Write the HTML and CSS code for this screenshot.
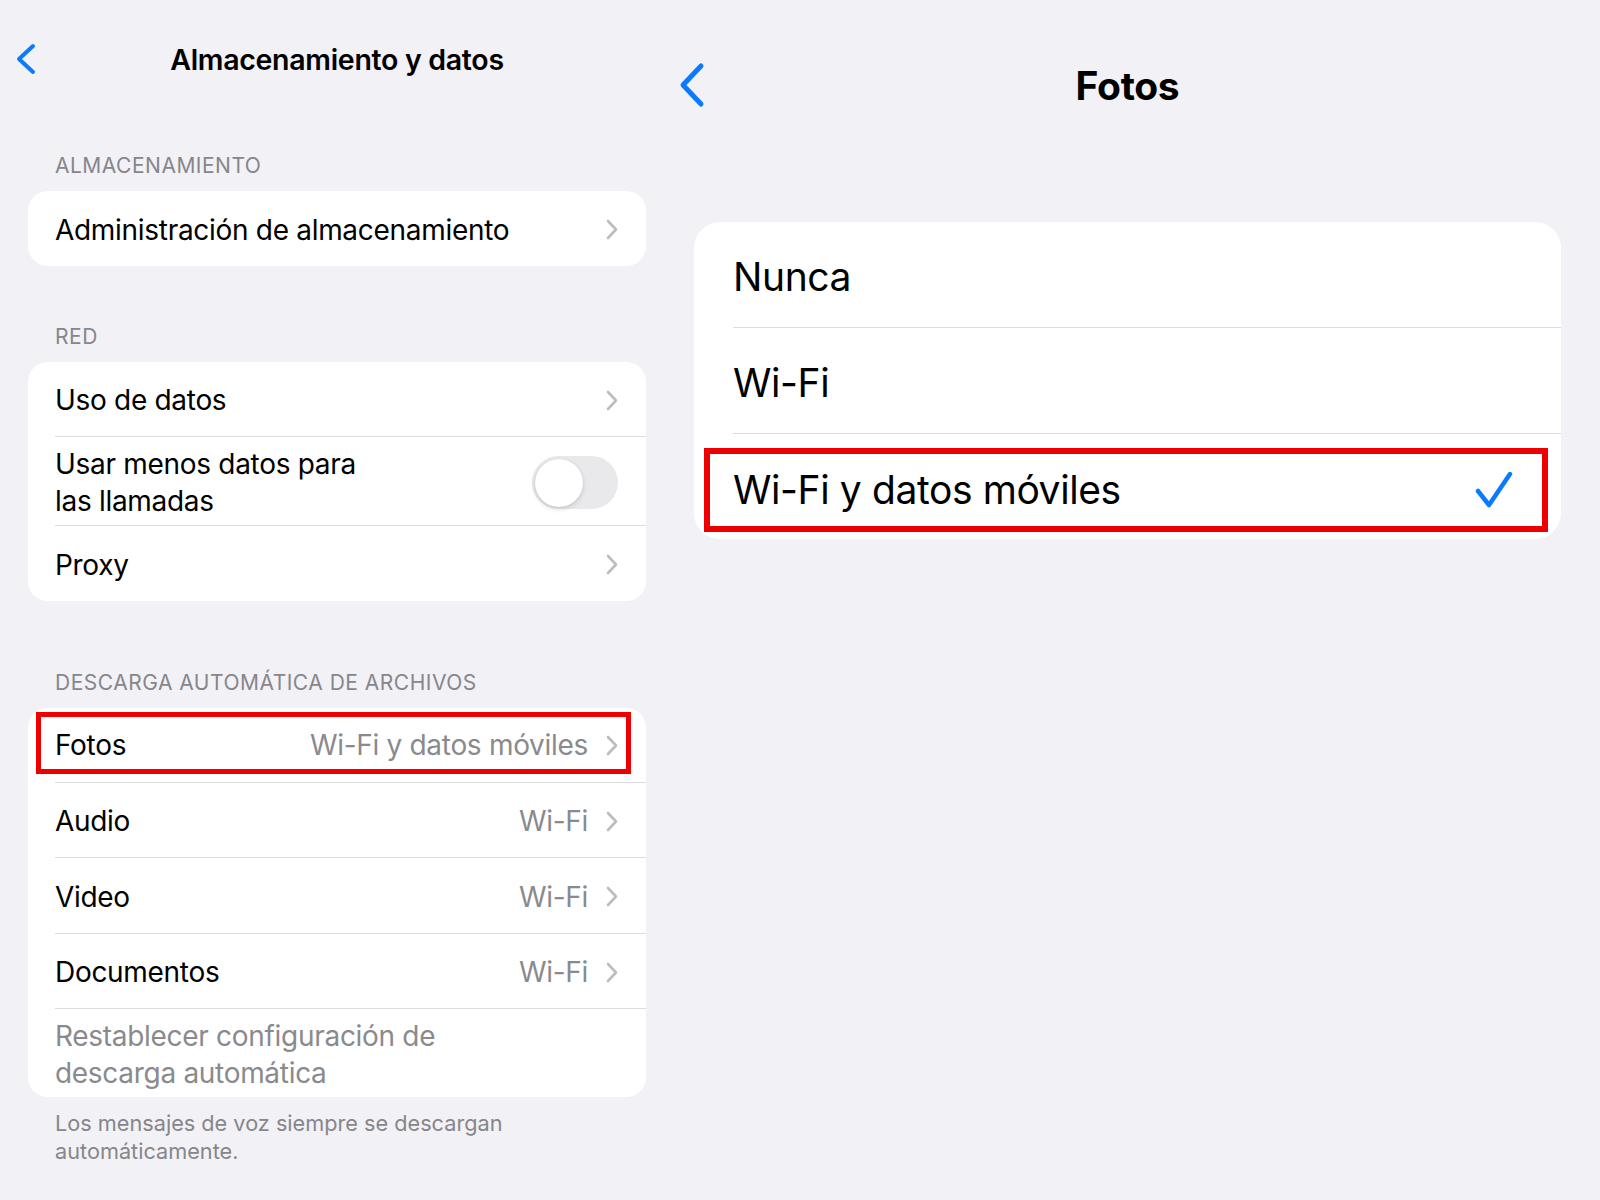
FILE: index.html
```html
<!DOCTYPE html>
<html>
<head>
    <title>Almacenamiento y datos</title>
    <link rel="stylesheet" href="styles.css">
</head>
<body>
<div class="screen">

    <section class="panel-left">
        <header class="nav">
            <svg class="back" width="22" height="32" viewBox="0 0 22 32"><path d="M18 3 L4 16 L18 29"/></svg>
            <h1 class="nav-title">Almacenamiento y datos</h1>
            <span></span>
        </header>

        <div class="group-label first">ALMACENAMIENTO</div>
        <div class="card">
            <div class="row">
                <span class="label">Administración de almacenamiento</span>
                <svg class="chev" width="12" height="21" viewBox="0 0 12 21"><path d="M2 2 L10 10.5 L2 19"/></svg>
            </div>
        </div>

        <div class="group-label">RED</div>
        <div class="card">
            <div class="row">
                <span class="label">Uso de datos</span>
                <svg class="chev" width="12" height="21" viewBox="0 0 12 21"><path d="M2 2 L10 10.5 L2 19"/></svg>
            </div>
            <div class="sep"></div>
            <div class="row tall">
                <span class="label">Usar menos datos para<br>las llamadas</span>
                <div class="toggle"><div class="knob"></div></div>
            </div>
            <div class="sep"></div>
            <div class="row">
                <span class="label">Proxy</span>
                <svg class="chev" width="12" height="21" viewBox="0 0 12 21"><path d="M2 2 L10 10.5 L2 19"/></svg>
            </div>
        </div>

        <div class="group-label wide">DESCARGA AUTOMÁTICA DE ARCHIVOS</div>
        <div class="card">
            <div class="row marked">
                <div class="mark">
                    <span class="label">Fotos</span>
                    <span class="value">Wi-Fi y datos móviles</span>
                    <svg class="chev" width="12" height="21" viewBox="0 0 12 21"><path d="M2 2 L10 10.5 L2 19"/></svg>
                </div>
            </div>
            <div class="sep"></div>
            <div class="row">
                <span class="label">Audio</span>
                <span class="value">Wi-Fi</span>
                <svg class="chev" width="12" height="21" viewBox="0 0 12 21"><path d="M2 2 L10 10.5 L2 19"/></svg>
            </div>
            <div class="sep"></div>
            <div class="row">
                <span class="label">Video</span>
                <span class="value">Wi-Fi</span>
                <svg class="chev" width="12" height="21" viewBox="0 0 12 21"><path d="M2 2 L10 10.5 L2 19"/></svg>
            </div>
            <div class="sep"></div>
            <div class="row">
                <span class="label">Documentos</span>
                <span class="value">Wi-Fi</span>
                <svg class="chev" width="12" height="21" viewBox="0 0 12 21"><path d="M2 2 L10 10.5 L2 19"/></svg>
            </div>
            <div class="sep"></div>
            <div class="row tall">
                <span class="label muted">Restablecer configuración de<br>descarga automática</span>
            </div>
        </div>
        <div class="footnote">
            Los mensajes de voz siempre se descargan<br>automáticamente.
        </div>
    </section>

    <section class="panel-right">
        <header class="nav nav-lg">
            <svg class="back back-lg" width="28" height="46" viewBox="0 0 28 46"><path d="M23 4 L5 23 L23 42"/></svg>
            <h1 class="nav-title">Fotos</h1>
            <span></span>
        </header>

        <div class="card card-lg">
            <div class="row-lg">
                <span class="label">Nunca</span>
            </div>
            <div class="sep"></div>
            <div class="row-lg">
                <span class="label">Wi-Fi</span>
            </div>
            <div class="sep"></div>
            <div class="row-lg marked">
                <div class="mark">
                    <span class="label">Wi-Fi y datos móviles</span>
                    <svg class="check" width="38" height="38" viewBox="0 0 38 38"><path d="M3 20 L14 34 L35 3"/></svg>
                </div>
            </div>
        </div>
    </section>

</div>
</body>
</html>
```

FILE: styles.css
```css
body {
margin: 0;
background-color: #F2F1F6;
font-family: Inter, "Noto Sans", sans-serif;
color: #000;
}

.screen {
display: flex;
width: 1600px;
height: 1200px;
}

/* left screen: storage settings */
.panel-left {
width: 674px;
flex-shrink: 0;
}

.panel-right {
flex: 1;
}

.nav {
display: grid;
grid-template-columns: 1fr auto 1fr;
align-items: center;
height: 118px;
padding: 0 15px;
}

.nav-lg {
height: 170px;
padding: 0 23px 0 4px;
}

.nav-title {
margin: 0;
font-size: 28.5px;
font-weight: 600;
letter-spacing: -0.3px;
}

.nav-lg .nav-title {
font-size: 39px;
font-weight: 700;
}

.back path {
fill: none;
stroke: #0A7AFF;
stroke-width: 4;
stroke-linecap: round;
stroke-linejoin: round;
}

.back-lg path {
stroke-width: 5;
}

.group-label {
margin: 59px 0 13px 55px;
font-size: 21px;
line-height: 24px;
color: #86868B;
letter-spacing: 0.5px;
}

.group-label.first {
margin-top: 36px;
}

.group-label.wide {
margin-top: 70px;
}

.card {
margin: 0 28px;
background-color: #fff;
border-radius: 20px;
overflow: hidden;
}

.card-lg {
margin: 52px 39px 0 20px;
border-radius: 26px;
}

.row {
display: flex;
align-items: center;
height: 74.5px;
padding: 3px 28px 0 27px;
box-sizing: border-box;
font-size: 28px;
letter-spacing: -0.3px;
}

.row.tall {
height: 88px;
line-height: 37px;
}

.row-lg {
display: flex;
align-items: center;
height: 105px;
padding: 3px 39px 0 39px;
box-sizing: border-box;
font-size: 39px;
letter-spacing: -0.4px;
}

.sep {
height: 1px;
margin-left: 27px;
background-color: #DCDCE0;
}

.card-lg .sep {
margin-left: 39px;
}

.label {
flex: 1;
}

.muted {
color: #8A8A8E;
}

.value {
color: #8A8A8E;
}

.chev {
margin-left: 18px;
flex-shrink: 0;
}

.chev path {
fill: none;
stroke: #BDBDC1;
stroke-width: 2.6;
stroke-linecap: round;
stroke-linejoin: round;
}

/* red highlight around the chosen option */
.row.marked {
height: 74px;
padding: 4px 15px 8px 8px;
}

.row-lg.marked {
padding: 14px 13px 7px 10px;
}

.mark {
flex: 1;
display: flex;
align-items: center;
height: 100%;
box-sizing: border-box;
border: 5px solid #EE0000;
padding: 5px 8px 0 14px;
}

.row-lg .mark {
border-width: 6px;
padding: 0 29px 1px 23px;
}

.check path {
fill: none;
stroke: #0A7AFF;
stroke-width: 4.5;
stroke-linecap: round;
stroke-linejoin: round;
}

.toggle {
display: flex;
align-items: center;
width: 86px;
height: 53px;
padding: 0 3px;
box-sizing: border-box;
border-radius: 27px;
background-color: #E9E9EB;
}

.knob {
width: 48px;
height: 48px;
border-radius: 50%;
background-color: #fff;
box-shadow: 0 2px 5px rgba(0, 0, 0, 0.15), 0 0 1px rgba(0, 0, 0, 0.12);
}

.footnote {
margin: 12px 0 0 55px;
font-size: 21.7px;
line-height: 28px;
color: #86868B;
}
```
